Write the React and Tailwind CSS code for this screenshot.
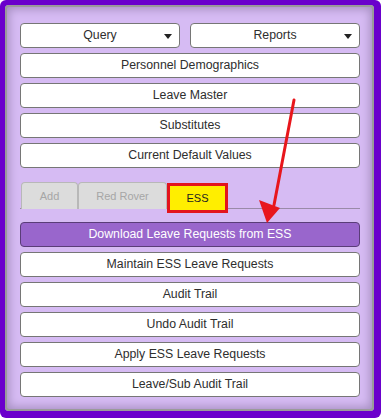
import React from 'react';

const topButtons = ['Personnel Demographics', 'Leave Master', 'Substitutes', 'Current Default Values'];
const essButtons = ['Maintain ESS Leave Requests', 'Audit Trail', 'Undo Audit Trail', 'Apply ESS Leave Requests', 'Leave/Sub Audit Trail'];

function Btn({ children }) {
    return (
        <button className="h-[25px] w-full bg-white border border-[#767676] rounded-[4px] text-[12.3px] text-[#2e2e2e] flex items-center justify-center">
            {children}
        </button>
    );
}

function Select({ label, className }) {
    return (
        <button className={`relative h-[25px] bg-white border border-[#767676] rounded-[4px] text-[12.3px] text-[#2e2e2e] flex items-center justify-center ${className}`}>
            {label}
            <span className="absolute right-[7px] top-[10px] w-0 h-0 border-l-[4px] border-r-[4px] border-t-[5px] border-l-transparent border-r-transparent border-t-[#222]" />
        </button>
    );
}

export default function App() {
    return (
        <div className="w-[381px] h-[418px] bg-white" style={{ fontFamily: '"Liberation Sans", Arial, sans-serif' }}>
            <div className="w-full h-full bg-[#6a00cc] rounded-[6px] pl-[5px] pt-[5px] pr-[7px] pb-[7px]">
                <div className="relative w-full h-full bg-[#d6bbf3] rounded-[4px] shadow-[inset_0_0_0_2px_#9a9a9a,inset_0_0_10px_4px_#a58ec0] pl-[15px] pr-[14px] pt-[18px]">
                    <div className="flex flex-col gap-[5px]">
                        <div className="flex gap-[10px]">
                            <Select label="Query" className="w-[160px]" />
                            <Select label="Reports" className="flex-1" />
                        </div>
                        {topButtons.map((b) => (
                            <Btn key={b}>{b}</Btn>
                        ))}
                    </div>

                    <div className="mt-[14px] flex items-start border-b border-[#9a8aa8] h-[27px]">
                        <div className="h-[27px] w-[57px] ml-[1px] bg-[#dcdcdc] border border-b-0 border-[#b8b8b8] rounded-t-[4px] text-[11px] text-[#a6a6a6] flex items-center justify-center">
                            Add
                        </div>
                        <div className="h-[27px] w-[89px] bg-[#dcdcdc] border border-b-0 border-[#b8b8b8] rounded-t-[4px] text-[11px] text-[#a6a6a6] flex items-center justify-center">
                            Red Rover
                        </div>
                        <div className="h-[30px] w-[61px] mt-[1px] bg-[#ffee00] border-[3px] border-[#e3141c] text-[11px] text-[#222] flex items-center justify-center">
                            ESS
                        </div>
                    </div>

                    <div className="mt-[13px] flex flex-col gap-[5px]">
                        <button className="h-[25px] w-full bg-[#9966cc] border border-[#5a3d78] rounded-[4px] text-[12.3px] text-white flex items-center justify-center">
                            Download Leave Requests from ESS
                        </button>
                        {essButtons.map((b) => (
                            <Btn key={b}>{b}</Btn>
                        ))}
                    </div>

                    {/* annotation arrow */}
                    <svg className="absolute left-0 top-0 pointer-events-none" width="369" height="406" viewBox="0 0 369 406">
                        <line x1="289" y1="95" x2="269" y2="200" stroke="#e8161c" strokeWidth="3" strokeLinecap="round" />
                        <polygon points="254,195 275,203 262,218" fill="#e8161c" />
                    </svg>
                </div>
            </div>
        </div>
    );
}
